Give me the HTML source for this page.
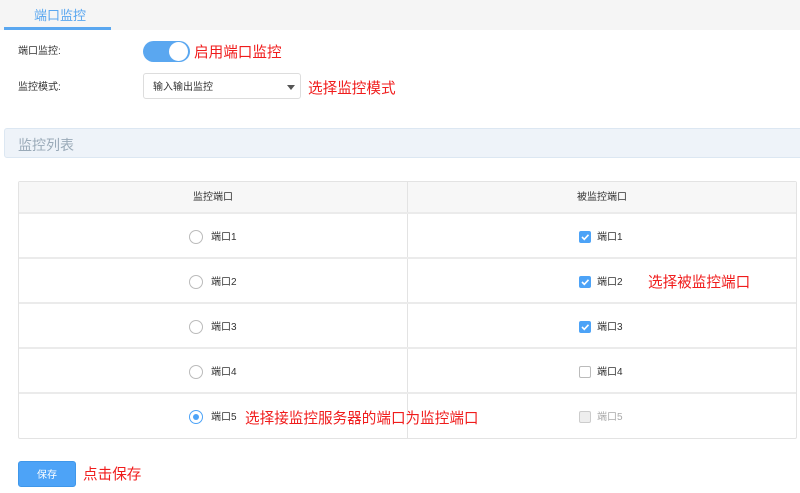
<!DOCTYPE html>
<html><head><meta charset="utf-8"><style>
*{margin:0;padding:0;box-sizing:border-box}
body{width:800px;height:493px;background:#fff;position:relative;overflow:hidden;font-family:"Liberation Sans","Noto Sans CJK SC",sans-serif;color:#333}
.a{position:absolute;white-space:nowrap;line-height:1}
.t{position:absolute;white-space:nowrap;line-height:1;margin-top:3px}
.red{color:#f01c1c;font-size:14.6px}
.s{font-size:10px;color:#333;margin-top:1px}
.radio{position:absolute;width:14px;height:14px;border:1px solid #bbb;border-radius:50%;background:#fff}
.cb{position:absolute;width:12px;height:12px;border:1px solid #bbb;border-radius:2px;background:#fff}
.cb.on{background:#4da3f7;border-color:#4da3f7}
.hl{position:absolute;left:19px;width:777px;height:2px;background:#ebebeb}
</style></head><body>
<div class="a" style="left:0;top:0;width:800px;height:30px;background:#f5f5f5"></div>
<div class="t" style="left:34px;top:6px;font-size:13px;color:#5aa7f0">端口监控</div>
<div class="a" style="left:4px;top:27px;width:107px;height:3px;background:#5aa7f0"></div>

<div class="t s" style="left:18px;top:46px">端口监控:</div>
<div class="a" style="left:143px;top:41px;width:47px;height:21px;border-radius:11px;background:#5aa7f0"></div>
<div class="a" style="left:169px;top:42px;width:19px;height:19px;border-radius:50%;background:#fff"></div>
<div class="t red" style="left:194px;top:43px">启用端口监控</div>

<div class="t s" style="left:18px;top:82px">监控模式:</div>
<div class="a" style="left:143px;top:73px;width:158px;height:26px;border:1px solid #ddd;border-radius:3px;background:#fff"></div>
<div class="t s" style="left:153px;top:82px">输入输出监控</div>
<div class="a" style="left:287px;top:85px;width:0;height:0;border-left:4px solid transparent;border-right:4px solid transparent;border-top:5px solid #555"></div>
<div class="t red" style="left:308px;top:79px">选择监控模式</div>

<div class="a" style="left:4px;top:128px;width:800px;height:30px;background:#eef3f9;border:1px solid #dce7f2;border-radius:3px"></div>
<div class="t" style="left:18px;top:135px;font-size:14px;color:#9aaab8">监控列表</div>

<div class="a" style="left:18px;top:181px;width:779px;height:258px;border:1px solid #e3e3e3;border-radius:2px"></div>
<div class="a" style="left:19px;top:182px;width:777px;height:30px;background:#f7f7f7"></div>
<div class="a" style="left:407px;top:182px;width:1px;height:256px;background:#e3e3e3"></div>
<div class="hl" style="top:212px"></div>
<div class="hl" style="top:257px"></div>
<div class="hl" style="top:302px"></div>
<div class="hl" style="top:347px"></div>
<div class="hl" style="top:392px"></div>
<div class="t s" style="left:193px;top:192px">监控端口</div>
<div class="t s" style="left:577px;top:192px">被监控端口</div>

<div class="radio" style="left:189px;top:230px"></div><div class="t s" style="left:211px;top:232px">端口1</div>
<div class="radio" style="left:189px;top:275px"></div><div class="t s" style="left:211px;top:277px">端口2</div>
<div class="radio" style="left:189px;top:320px"></div><div class="t s" style="left:211px;top:322px">端口3</div>
<div class="radio" style="left:189px;top:365px"></div><div class="t s" style="left:211px;top:367px">端口4</div>
<div class="radio" style="left:189px;top:410px;border-color:#4da3f7"></div><div class="a" style="left:193px;top:414px;width:6px;height:6px;border-radius:50%;background:#4da3f7"></div><div class="t s" style="left:211px;top:412px">端口5</div>
<div class="t red" style="left:245px;top:409px">选择接监控服务器的端口为监控端口</div>

<div class="cb on" style="left:579px;top:231px"><svg width="10" height="10" style="position:absolute;left:0;top:0"><path d="M2 5 L4.3 7.3 L8.5 2.8" stroke="#fff" stroke-width="1.6" fill="none"/></svg></div><div class="t s" style="left:597px;top:232px">端口1</div>
<div class="cb on" style="left:579px;top:276px"><svg width="10" height="10" style="position:absolute;left:0;top:0"><path d="M2 5 L4.3 7.3 L8.5 2.8" stroke="#fff" stroke-width="1.6" fill="none"/></svg></div><div class="t s" style="left:597px;top:277px">端口2</div>
<div class="t red" style="left:648px;top:273px">选择被监控端口</div>
<div class="cb on" style="left:579px;top:321px"><svg width="10" height="10" style="position:absolute;left:0;top:0"><path d="M2 5 L4.3 7.3 L8.5 2.8" stroke="#fff" stroke-width="1.6" fill="none"/></svg></div><div class="t s" style="left:597px;top:322px">端口3</div>
<div class="cb" style="left:579px;top:366px"></div><div class="t s" style="left:597px;top:367px">端口4</div>
<div class="cb" style="left:579px;top:411px;background:#eee;border-color:#ccc"></div><div class="t s" style="left:597px;top:412px;color:#aaa">端口5</div>

<div class="a" style="left:18px;top:461px;width:58px;height:26px;background:#4da3f7;border-radius:3px;border:1px solid #3f97ea"></div>
<div class="t" style="left:37px;top:468px;font-size:10px;color:#fff">保存</div>
<div class="t red" style="left:83px;top:465px">点击保存</div>
</body></html>
